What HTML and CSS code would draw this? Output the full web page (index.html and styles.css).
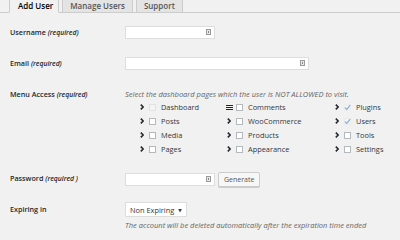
FILE: index.html
```html
<!DOCTYPE html>
<html lang="en">
<head>
  <meta charset="UTF-8">
  <title>Add User</title>
  <link rel="stylesheet" href="styles.css">
</head>
<body>
  <nav class="tabs">
    <span class="tab active">Add User</span>
    <span class="tab">Manage Users</span>
    <span class="tab">Support</span>
  </nav>

  <form class="form">
    <div class="row row-user">
      <label class="label">Username <em>(required)</em></label>
      <span class="input-wrap short"><input type="text"><i class="key"></i></span>
    </div>

    <div class="row row-email">
      <label class="label">Email <em>(required)</em></label>
      <span class="input-wrap long"><input type="text"><i class="key"></i></span>
    </div>

    <div class="row row-menu">
      <label class="label">Menu Access <em>(required)</em></label>
      <div class="field">
        <p class="desc">Select the dashboard pages which the user is NOT ALLOWED to visit.</p>
        <div class="pages">
          <div class="page"><svg class="chev" viewBox="0 0 4 6"><polyline points="0.8,0.6 3.2,3 0.8,5.4"/></svg><span class="box disabled"></span>Dashboard</div>
          <div class="page"><svg class="burger" viewBox="0 0 7 5"><path d="M0 0.5H7M0 2.5H7M0 4.5H7"/></svg><span class="box"></span>Comments</div>
          <div class="page"><svg class="chev" viewBox="0 0 4 6"><polyline points="0.8,0.6 3.2,3 0.8,5.4"/></svg><span class="box checked"><svg viewBox="0 0 7 7"><polyline points="1,3.6 2.8,5.4 6.2,1.2"/></svg></span>Plugins</div>

          <div class="page"><svg class="chev" viewBox="0 0 4 6"><polyline points="0.8,0.6 3.2,3 0.8,5.4"/></svg><span class="box"></span>Posts</div>
          <div class="page"><svg class="chev" viewBox="0 0 4 6"><polyline points="0.8,0.6 3.2,3 0.8,5.4"/></svg><span class="box"></span>WooCommerce</div>
          <div class="page"><svg class="chev" viewBox="0 0 4 6"><polyline points="0.8,0.6 3.2,3 0.8,5.4"/></svg><span class="box checked"><svg viewBox="0 0 7 7"><polyline points="1,3.6 2.8,5.4 6.2,1.2"/></svg></span>Users</div>

          <div class="page"><svg class="chev" viewBox="0 0 4 6"><polyline points="0.8,0.6 3.2,3 0.8,5.4"/></svg><span class="box"></span>Media</div>
          <div class="page"><svg class="chev" viewBox="0 0 4 6"><polyline points="0.8,0.6 3.2,3 0.8,5.4"/></svg><span class="box"></span>Products</div>
          <div class="page"><svg class="chev" viewBox="0 0 4 6"><polyline points="0.8,0.6 3.2,3 0.8,5.4"/></svg><span class="box"></span>Tools</div>

          <div class="page"><svg class="chev" viewBox="0 0 4 6"><polyline points="0.8,0.6 3.2,3 0.8,5.4"/></svg><span class="box"></span>Pages</div>
          <div class="page"><svg class="chev" viewBox="0 0 4 6"><polyline points="0.8,0.6 3.2,3 0.8,5.4"/></svg><span class="box"></span>Appearance</div>
          <div class="page"><svg class="chev" viewBox="0 0 4 6"><polyline points="0.8,0.6 3.2,3 0.8,5.4"/></svg><span class="box"></span>Settings</div>
        </div>
      </div>
    </div>

    <div class="row row-pass">
      <label class="label">Password <em>(required )</em></label>
      <div class="field inline">
        <span class="input-wrap short"><input type="text"><i class="key"></i></span>
        <button type="button" class="btn">Generate</button>
      </div>
    </div>

    <div class="row row-exp">
      <label class="label">Expiring in</label>
      <div class="field">
        <span class="select">Non Expiring <i class="caret">&#9660;</i></span>
        <p class="desc desc-exp">The account will be deleted automatically after the expiration time ended</p>
      </div>
    </div>
  </form>
</body>
</html>
```

FILE: styles.css
```css
body {
  margin: 0;
  padding: 0;
  background: #f1f1f1;
  font-family: "Open Sans", "DejaVu Sans", sans-serif;
  color: #23282d;
  overflow: hidden;
}
.tabs {
  display: flex;
  gap: 3px;
  padding-left: 9px;
  border-bottom: 1px solid #ccc;
  height: 13px;
  box-sizing: border-box;
}
.tab {
  display: block;
  height: 13px;
  box-sizing: border-box;
  padding: 0 7px;
  border: 1px solid #ccc;
  border-top: none;
  background: #e4e4e4;
  color: #555;
  font-size: 8px;
  font-weight: 600;
  line-height: 11px;
}
.tab.active {
  background: #f1f1f1;
  color: #000;
  border-bottom-color: #f1f1f1;
  padding-left: 8px;
  padding-right: 5px;
}
.form {
  padding-left: 10px;
}
.row {
  display: flex;
}
.label {
  width: 115px;
  flex: none;
  font-size: 7.2px;
  font-weight: 600;
  line-height: 13px;
}
.label em {
  font-size: 6.8px;
  font-style: italic;
}
.row-user {
  margin-top: 13px;
}
.row-email {
  margin-top: 18px;
}
.row-menu {
  margin-top: 19px;
}
.row-menu .label {
  line-height: 11px;
}
.row-pass {
  margin-top: 16px;
}
.row-exp {
  margin-top: 16px;
}
.input-wrap {
  position: relative;
  display: block;
  height: 13px;
}
.input-wrap input {
  display: block;
  width: 100%;
  height: 13px;
  box-sizing: border-box;
  margin: 0;
  padding: 0;
  border: 1px solid #ddd;
  background: #fff;
}
.short {
  width: 90px;
}
.long {
  width: 184px;
}
.key {
  position: absolute;
  right: 4px;
  top: 3px;
  width: 5px;
  height: 6px;
  box-sizing: border-box;
  border: 1px solid #9a9a9a;
  background: #e8e8e8;
}
.key::after {
  content: "";
  position: absolute;
  left: 1px;
  top: 1px;
  width: 1px;
  height: 2px;
  background: #888;
}
.field {
  display: flex;
  flex-direction: column;
}
.field.inline {
  flex-direction: row;
  align-items: center;
  gap: 3px;
}
.desc {
  margin: 0;
  font-size: 7.5px;
  font-style: italic;
  color: #666;
  line-height: 11px;
}
.pages {
  display: grid;
  grid-template-columns: 87px 108px 60px;
  grid-auto-rows: 14px;
  padding-left: 15px;
  margin-top: 0;
  font-size: 7.4px;
  color: #32373c;
}
.page {
  display: flex;
  align-items: center;
  white-space: nowrap;
}
.chev {
  width: 4px;
  height: 6px;
  margin-right: 5px;
  fill: none;
  stroke: #23282d;
  stroke-width: 1.6;
}
.burger {
  width: 7px;
  height: 5px;
  margin-right: 3px;
  margin-left: -1px;
  fill: none;
  stroke: #23282d;
  stroke-width: 1;
}
.box {
  width: 7px;
  height: 7px;
  box-sizing: border-box;
  border: 1px solid #b4b9be;
  background: #fff;
  margin-right: 5px;
  flex: none;
}
.box.disabled {
  border-color: #e2e2e2;
  background: #f4f4f4;
}
.box.checked {
  border-color: #ececec;
  background: #f3f3f3;
}
.box svg {
  display: block;
  width: 7px;
  height: 7px;
  margin: -1px;
  fill: none;
  stroke: #79b1de;
  stroke-width: 1.1;
}
.btn {
  height: 15px;
  padding: 0 5px;
  margin: 0;
  border: 1px solid #ccc;
  border-radius: 2px;
  background: #f7f7f7;
  color: #555;
  font-family: inherit;
  font-size: 7px;
  line-height: 13px;
  box-shadow: 0 1px 0 #ccc;
}
.select {
  display: flex;
  align-items: center;
  align-self: flex-start;
  height: 15px;
  box-sizing: border-box;
  padding: 0 4px;
  background: #fff;
  border: 1px solid #ddd;
  font-size: 7.4px;
  color: #32373c;
  margin-top: -1px;
}
.caret {
  font-style: normal;
  font-size: 4.5px;
  margin-left: 4px;
}
.desc-exp {
  margin-top: 3px;
}
```
